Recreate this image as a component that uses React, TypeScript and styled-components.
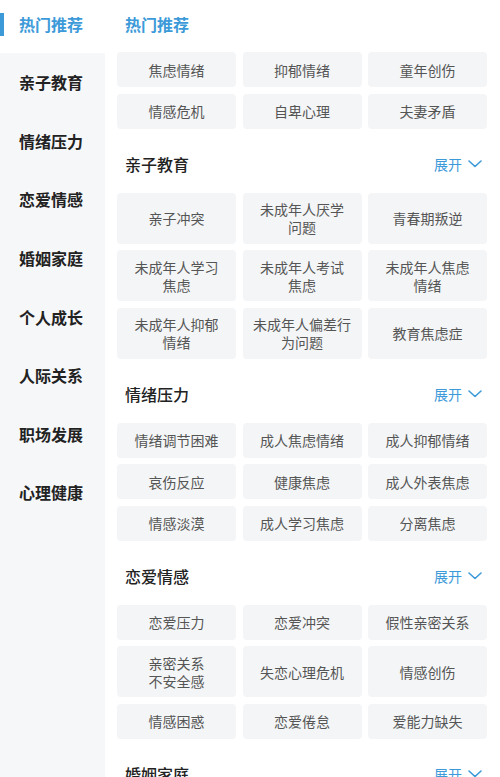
import React from "react";
import styled, { createGlobalStyle } from "styled-components";

const BLUE = "#3d9ad9";

const GlobalStyle = createGlobalStyle`
  html, body {
    margin: 0;
    padding: 0;
    background: #ffffff;
  }
  body {
    font-family: "Noto Sans CJK SC", "Noto Sans", sans-serif;
    -webkit-font-smoothing: antialiased;
  }
`;

interface Section {
  title: string;
  expandable: boolean;
  tags: string[];
}

const categories = [
  "热门推荐",
  "亲子教育",
  "情绪压力",
  "恋爱情感",
  "婚姻家庭",
  "个人成长",
  "人际关系",
  "职场发展",
  "心理健康",
];

const sections: Section[] = [
  {
    title: "热门推荐",
    expandable: false,
    tags: ["焦虑情绪", "抑郁情绪", "童年创伤", "情感危机", "自卑心理", "夫妻矛盾"],
  },
  {
    title: "亲子教育",
    expandable: true,
    tags: [
      "亲子冲突",
      "未成年人厌学\n问题",
      "青春期叛逆",
      "未成年人学习\n焦虑",
      "未成年人考试\n焦虑",
      "未成年人焦虑\n情绪",
      "未成年人抑郁\n情绪",
      "未成年人偏差行\n为问题",
      "教育焦虑症",
    ],
  },
  {
    title: "情绪压力",
    expandable: true,
    tags: [
      "情绪调节困难",
      "成人焦虑情绪",
      "成人抑郁情绪",
      "哀伤反应",
      "健康焦虑",
      "成人外表焦虑",
      "情感淡漠",
      "成人学习焦虑",
      "分离焦虑",
    ],
  },
  {
    title: "恋爱情感",
    expandable: true,
    tags: [
      "恋爱压力",
      "恋爱冲突",
      "假性亲密关系",
      "亲密关系\n不安全感",
      "失恋心理危机",
      "情感创伤",
      "情感困惑",
      "恋爱倦怠",
      "爱能力缺失",
    ],
  },
  {
    title: "婚姻家庭",
    expandable: true,
    tags: ["婚姻危机", "夫妻矛盾", "婆媳关系"],
  },
];

export default function App() {
  return (
    <>
      <GlobalStyle />
      <Page>
        <Sidebar>
          {categories.map((c, i) => (
            <NavItem key={c} $active={i === 0} $afterActive={i === 1}>
              {c}
            </NavItem>
          ))}
        </Sidebar>
        <Content>
          {sections.map((s, i) => (
            <SectionBlock key={s.title}>
              <SectionHeader $first={i === 0}>
                <SectionTitle $highlight={i === 0}>{s.title}</SectionTitle>
                {s.expandable && (
                  <Expand>
                    展开
                    <svg width="14" height="8" viewBox="0 0 14 8" fill="none">
                      <path
                        d="M1 1l6 5.5L13 1"
                        stroke={BLUE}
                        strokeWidth="1.6"
                        strokeLinecap="round"
                        strokeLinejoin="round"
                      />
                    </svg>
                  </Expand>
                )}
              </SectionHeader>
              <TagGrid>
                {s.tags.map((t) => (
                  <Tag key={t}>{t}</Tag>
                ))}
              </TagGrid>
            </SectionBlock>
          ))}
        </Content>
      </Page>
    </>
  );
}

const Page = styled.div`
  display: flex;
  width: 500px;
  height: 777px;
  overflow: hidden;
  background: #ffffff;
`;

const Sidebar = styled.nav`
  flex: 0 0 105px;
  display: flex;
  flex-direction: column;
  background: #f6f7f9;
`;

const NavItem = styled.div<{ $active: boolean; $afterActive: boolean }>`
  position: relative;
  box-sizing: border-box;
  height: ${(p) => (p.$active ? "53px" : "58.6px")};
  padding: ${(p) => (p.$active ? "0 0 5px 19px" : "0 0 0 19px")};
  display: flex;
  align-items: center;
  font-size: 16px;
  font-weight: 700;
  color: ${(p) => (p.$active ? BLUE : "#222222")};
  background: ${(p) => (p.$active ? "#ffffff" : "transparent")};
  border-top-right-radius: ${(p) => (p.$afterActive ? "6px" : "0")};

  &::before {
    content: "";
    display: ${(p) => (p.$active ? "block" : "none")};
    position: absolute;
    left: 0;
    top: 13px;
    width: 4px;
    height: 23px;
    background: ${BLUE};
  }
`;

const Content = styled.main`
  flex: 1;
  padding: 0 13px 0 12px;
  display: flex;
  flex-direction: column;
`;

const SectionBlock = styled.section`
  display: flex;
  flex-direction: column;
`;

const SectionHeader = styled.div<{ $first: boolean }>`
  height: 22px;
  margin: ${(p) => (p.$first ? "13px 0 17px" : "24px 0 18px")};
  padding: 0 5px 0 8px;
  display: flex;
  align-items: center;
  justify-content: space-between;
`;

const SectionTitle = styled.h2<{ $highlight: boolean }>`
  margin: 0;
  font-size: 16px;
  line-height: 22px;
  font-weight: ${(p) => (p.$highlight ? 700 : 500)};
  color: ${(p) => (p.$highlight ? BLUE : "#222222")};
`;

const Expand = styled.span`
  display: flex;
  align-items: center;
  gap: 6px;
  font-size: 14px;
  color: ${BLUE};
`;

const TagGrid = styled.div`
  display: grid;
  grid-template-columns: repeat(3, 1fr);
  gap: 6.5px;
`;

const Tag = styled.div`
  box-sizing: border-box;
  min-height: 35px;
  padding: 7.5px 6px;
  display: flex;
  align-items: center;
  justify-content: center;
  text-align: center;
  white-space: pre-line;
  font-size: 14px;
  line-height: 18px;
  color: #555555;
  background: #f4f5f7;
  border-radius: 4px;
`;
